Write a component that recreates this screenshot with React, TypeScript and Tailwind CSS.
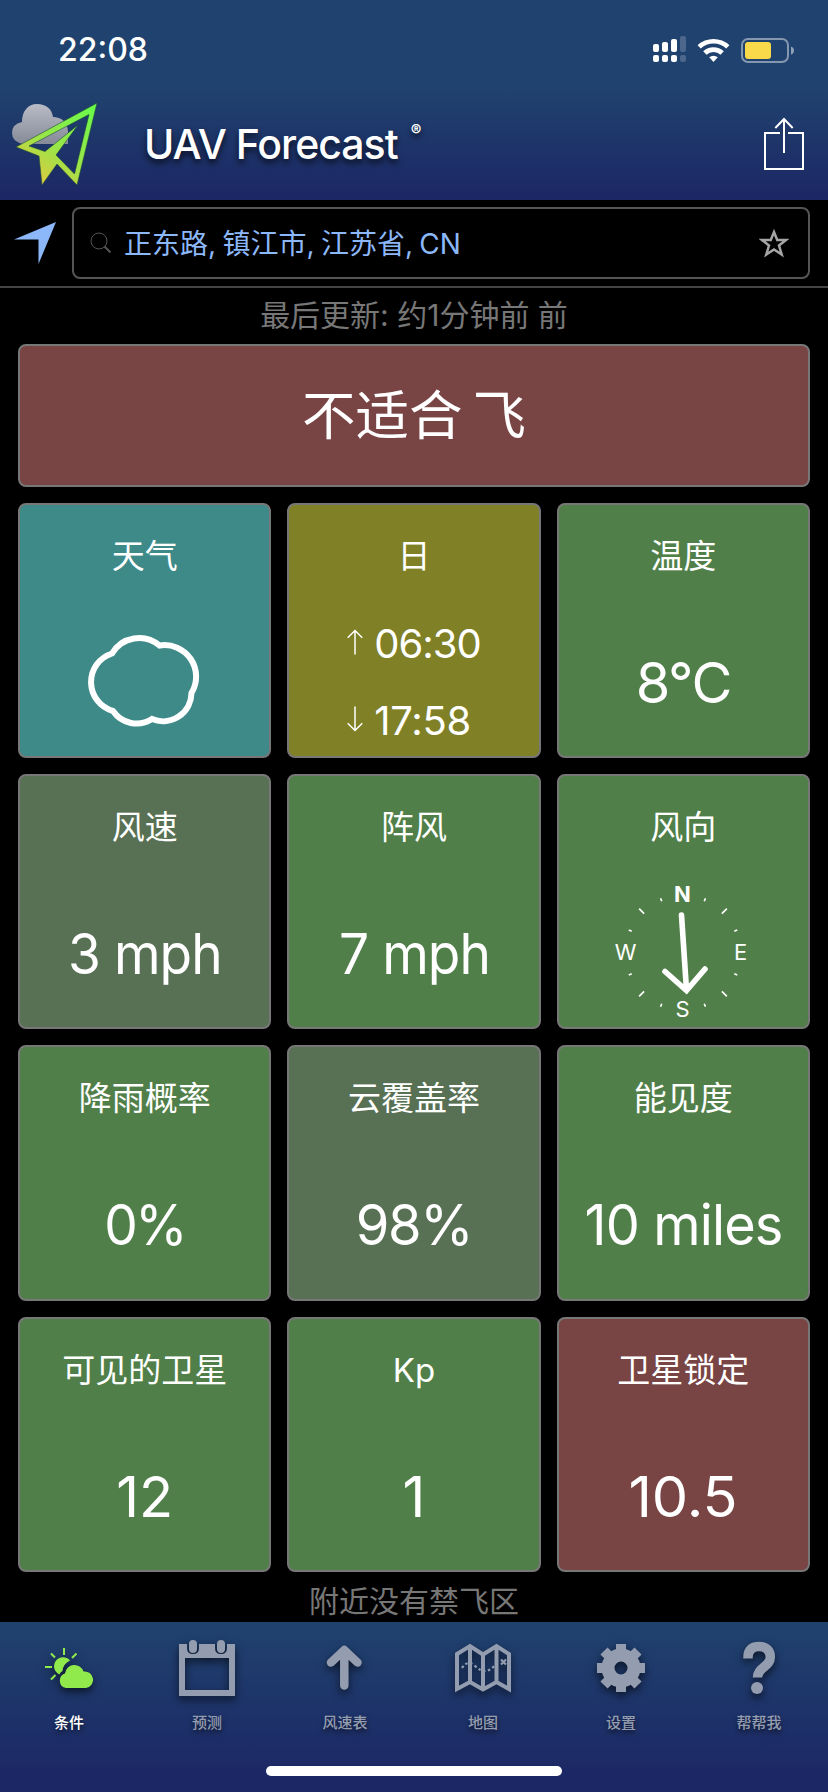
import type { ReactNode } from 'react'

type TileProps = {
  title: string
  color: string
  value?: string
  fit?: string
  children?: ReactNode
}

function Tile({ title, color, value, fit = '', children }: TileProps) {
  return (
    <div className={`flex h-[255.4px] flex-col items-center rounded-lg border-2 border-[#777777] text-white ${color}`}>
      <div className="mt-[29px] text-[33px] leading-[44px]">{title}</div>
      {value && <div className={`mt-[72px] text-[56px] leading-[66px] whitespace-nowrap ${fit}`}>{value}</div>}
      {children}
    </div>
  )
}

function Logo() {
  return (
    <svg className="ml-3 h-[84px] w-[87px]" viewBox="12 102 87 84">
      <defs>
        <linearGradient id="cloud" x1="0" y1="0" x2="0" y2="1">
          <stop offset="0" stopColor="#b9bcc6" />
          <stop offset="1" stopColor="#868a98" />
        </linearGradient>
        <linearGradient id="plane" gradientUnits="userSpaceOnUse" x1="92" y1="108" x2="40" y2="182">
          <stop offset="0" stopColor="#6bf94b" />
          <stop offset="0.6" stopColor="#9be448" />
          <stop offset="1" stopColor="#dccb40" />
        </linearGradient>
      </defs>
      <path fill="url(#cloud)" d="M22 144Q12 141 12 133Q12 124 22 122C22 111 28 104 37 104C46 104 52 109 53 117C61 117 68 122 68 132V144Z" />
      <path
        fill="url(#plane)"
        fillRule="evenodd"
        stroke="#1d4c38"
        strokeWidth="0.6"
        d="M97 103L16 147L39 156L42 185L57 164L77 185ZM89 114.500L74.500 174L56 155L78 125L45 151.500L29 146Z"
      />
    </svg>
  )
}

function StatusIcons() {
  return (
    <svg className="h-[28px] w-[142px]" viewBox="653 35 142 28">
      <g fill="#fff">
        <rect x="653" y="43" width="6" height="8" rx="2" />
        <rect x="662" y="41" width="6" height="10" rx="2" />
        <rect x="671" y="38" width="6" height="13" rx="2" />
        <rect x="680" y="35" width="6" height="16" rx="2" opacity=".2" />
        <rect x="653" y="54" width="6" height="7" rx="2" />
        <rect x="662" y="54" width="6" height="7" rx="2" />
        <rect x="671" y="54" width="6" height="7" rx="2" />
        <rect x="680" y="54" width="6" height="7" rx="2" opacity=".2" />
        <path d="M697.600 44.300a23 23 0 0 1 31.800 0l-3.200 3.300a18.400 18.400 0 0 0-25.400 0Z" />
        <path d="M703.200 50.300a15 15 0 0 1 20.600 0l-3.300 3.400a10.200 10.200 0 0 0-14 0Z" />
        <path d="M709.200 56.300a6.500 6.500 0 0 1 8.600 0L713.500 61Z" />
      </g>
      <rect x="742" y="38" width="46" height="23" rx="6" fill="none" stroke="#fff" strokeOpacity=".45" strokeWidth="2" />
      <rect x="745" y="41" width="26" height="17" rx="3" fill="#f9d84a" />
      <path d="M791 45.500q3 1 3 4t-3 4Z" fill="#fff" opacity=".5" />
    </svg>
  )
}

function Compass() {
  const long = [45, 135, 225, 315]
  const short = [22.5, 67.5, 112.5, 157.5, 202.5, 247.5, 292.5, 337.5]
  return (
    <svg className="mt-[34px] h-[136px] w-[140px] overflow-visible" viewBox="613 883 140 136" fill="#fff">
      <g stroke="#fff" strokeWidth="1.6">
        {long.map((a) => (
          <path key={a} d="M683 897.500v-7" transform={`rotate(${a} 683 952.5)`} />
        ))}
        {short.map((a) => (
          <path key={a} d="M683 897v-3.200" transform={`rotate(${a} 683 952.5)`} />
        ))}
      </g>
      <g fontSize="22" textAnchor="middle">
        <text x="682.5" y="902" fontWeight="700">N</text>
        <text x="682.5" y="1017">S</text>
        <text x="625.5" y="960">W</text>
        <text x="740.5" y="960">E</text>
      </g>
      <path d="M681.500 915L686.500 990M665 971.500L686.500 990.500L705 969" fill="none" stroke="#fff" strokeWidth="5.600" strokeLinecap="round" />
    </svg>
  )
}

function SunRow({ time, down }: { time: string; down?: boolean }) {
  return (
    <div className="flex h-[46px] items-center">
      <svg className="mr-[11px] mb-1 h-[26px] w-4" viewBox="0 0 16 26" fill="none" stroke="#fff" strokeWidth="1.500">
        {down ? <path d="M8 .5v24M.7 17.300L8 24.500l7.300-7.200" /> : <path d="M8 25.500v-24M.7 8.700L8 1.500l7.300 7.200" />}
      </svg>
      <span className={`text-[40px] ${down ? 'tracking-[-0.3px]' : 'tracking-[-1px]'}`}>{time}</span>
    </div>
  )
}

const icons: Record<string, ReactNode> = {
  weather: (
    <>
      <g stroke="currentColor" strokeWidth="2">
        <path d="M64 1648v7M45 1667h7M51 1653.500l4 4M76.500 1653.500l-4.500 4.500M51 1679.500l4.500-4.500" />
      </g>
      <path d="M59.500 1674.500A9 9 0 1 1 70 1660.500Q63 1664 62.500 1671Q60 1672 59.500 1674.500Z" />
      <path d="M66 1688A7.500 7.500 0 0 1 65 1673.500A9.500 9.500 0 0 1 83.500 1671.500A8.300 8.300 0 0 1 86 1688Z" />
    </>
  ),
  calendar: (
    <>
      <path fillRule="evenodd" d="M179 1644h8v4q0 6 6 6t6-6v-4h16v4q0 6 6 6t6-6v-4h8v52h-56ZM185 1658v32h44v-32Z" />
      <rect x="189" y="1640" width="8" height="13" rx="4" />
      <rect x="217" y="1640" width="8" height="13" rx="4" />
    </>
  ),
  arrow: <path d="M344.300 1685.500V1651M331 1662.500L344.300 1650L357.500 1662.500" fill="none" stroke="currentColor" strokeWidth="8.500" strokeLinecap="round" strokeLinejoin="round" />,
  map: (
    <g fill="none" stroke="currentColor">
      <path strokeWidth="4" d="M457 1654L470 1646L483 1654.500L496.500 1646L509 1654V1689L496.500 1682L483 1689.500L470 1682L457 1689ZM470 1646V1682M483 1654V1690M496.500 1646V1682" />
      <path strokeWidth="2.200" strokeDasharray="2.5 2.5" d="M462 1668Q467 1660 474 1665Q481 1672 487 1671Q494 1668 497 1662" />
      <path strokeWidth="2.200" d="M501 1659.500l5 5M506 1659.500l-5 5" />
    </g>
  ),
  gear: (
    <>
      <circle cx="621" cy="1668" r="13" fill="none" stroke="currentColor" strokeWidth="13" />
      <g stroke="currentColor" strokeWidth="10">
        <path d="M621 1644v9M621 1683v9M597 1668h9M636 1668h9M604 1651l7 7M631 1678l7 7M604 1685l7-7M631 1658l7-7" />
      </g>
    </>
  ),
  help: (
    <>
      <path
        d="M748 1658.500V1657C748 1649 753 1646.500 759 1646.500C766 1646.500 770.300 1650.500 770.300 1657C770.300 1667 757.500 1667 757.500 1677.500"
        fill="none"
        stroke="currentColor"
        strokeWidth="9.500"
      />
      <circle cx="757" cy="1688" r="6" />
    </>
  ),
}

const tabs = [
  { label: '条件', icon: 'weather', x: 39, active: true },
  { label: '预测', icon: 'calendar', x: 177 },
  { label: '风速表', icon: 'arrow', x: 315 },
  { label: '地图', icon: 'map', x: 453 },
  { label: '设置', icon: 'gear', x: 591 },
  { label: '帮帮我', icon: 'help', x: 729 },
]

export default function App() {
  return (
    <div className="flex h-[1792px] w-[828px] flex-col overflow-hidden bg-black font-['Inter','Noto_Sans_CJK_SC',sans-serif]">
      <header className="h-[200px] shrink-0 bg-linear-to-b from-[#20426e] from-44% to-[#1c2865] to-97% text-white">
        <div className="flex h-[100px] items-center justify-between pr-[33px] pl-[58px]">
          <span className="text-[32px] font-medium">22:08</span>
          <StatusIcons />
        </div>
        <div className="flex h-[88px] items-center">
          <Logo />
          <h1 className="mt-[2px] ml-[45px] text-[41px] font-medium tracking-[-1px] [text-shadow:0_4px_6px_#000b]">UAV Forecast</h1>
          <span className="mb-7 ml-[13px] text-[16px] font-bold [text-shadow:0_4px_6px_#000b]">®</span>
          <svg className="mr-[24px] ml-auto h-[54px] w-10" viewBox="0 0 40 54" fill="none" stroke="#fff" strokeWidth="2">
            <path d="M16 16H1v36h38V16H24M20 36V2M11.300 11L20 2l8.700 9" />
          </svg>
        </div>
      </header>

      <div className="flex h-[88px] shrink-0 items-start border-b-2 border-[#444444] pt-[7px]">
        <svg className="mt-[15px] ml-[14px] h-[43px] w-[43px]" viewBox="0 0 43 43" fill="#8cb8fa">
          <path d="M42 0L24.500 42V17.500H0Z" />
        </svg>
        <div className="ml-[15px] flex h-[72px] w-[738px] items-center rounded-lg border-2 border-[#555555] pr-[19px] pl-[16px]">
          <svg className="h-[22px] w-[22px]" viewBox="0 0 22 22" fill="none" stroke="#555">
            <circle cx="9" cy="9" r="8" />
            <path d="M14.500 14.500l6 6" strokeWidth="2" />
          </svg>
          <span className="mt-px ml-3 text-[28px] text-[#8cb8fa] [word-spacing:-1.5px]">正东路, 镇江市, 江苏省, CN</span>
          <svg className="ml-auto h-[30px] w-[30px]" viewBox="0 0 30 30" fill="none" stroke="#a5a5a5" strokeWidth="2.500">
            <path d="M15 4L18.200 12H27L20 17.500L22.700 26.500L15 21.500L7.300 26.500L10 17.500L3 12H11.800Z" />
          </svg>
        </div>
      </div>

      <p className="h-[56px] shrink-0 text-center text-[30px] leading-[55px] text-[#777777]">最后更新: 约1分钟前 前</p>

      <main className="mx-[18px] shrink-0">
        <div className="flex h-[142.500px] items-center justify-center rounded-lg border-2 border-[#777777] bg-[#784444] pt-px text-[53.500px] text-white [word-spacing:-5px]">
          不适合 飞
        </div>
        <div className="mt-4 grid grid-cols-3 gap-4">
          <Tile title="天气" color="bg-[#3d8a89]">
            <svg className="mt-[54px] h-[100px] w-[120px]" viewBox="85 632 120 100" fill="none" stroke="#fff" strokeWidth="6">
              <path d="M112 653.500A31.500 31.500 0 0 1 159.500 645.500A31.500 31.500 0 0 1 191.500 693A28.500 28.500 0 0 1 152 719A28.500 28.500 0 0 1 113 711A30 30 0 0 1 112 653.500Z" />
            </svg>
          </Tile>
          <Tile title="日" color="bg-[#808026]">
            <div className="mt-[43px] flex flex-col gap-[31px]">
              <SunRow time="06:30" />
              <SunRow time="17:58" down />
            </div>
          </Tile>
          <Tile title="温度" color="bg-[#517f49]" value="8°C" fit="tracking-[-1.5px]" />
          <Tile title="风速" color="bg-[#587054]" value="3 mph" fit="scale-x-[0.95] tracking-[-1px]" />
          <Tile title="阵风" color="bg-[#517f49]" value="7 mph" fit="scale-x-[0.95] tracking-[-1px]" />
          <Tile title="风向" color="bg-[#517f49]">
            <Compass />
          </Tile>
          <Tile title="降雨概率" color="bg-[#517f49]" value="0%" fit="scale-x-[0.95] tracking-[-2.5px]" />
          <Tile title="云覆盖率" color="bg-[#587054]" value="98%" fit="scale-x-[0.97] tracking-[-1.5px]" />
          <Tile title="能见度" color="bg-[#517f49]" value="10 miles" fit="scale-x-[0.965] tracking-[-0.9px]" />
          <Tile title="可见的卫星" color="bg-[#517f49]" value="12" />
          <Tile title="Kp" color="bg-[#517f49]" value="1" />
          <Tile title="卫星锁定" color="bg-[#784444]" value="10.5" fit="scale-x-[1.03]" />
        </div>
      </main>

      <p className="h-[50px] shrink-0 text-center text-[30px] leading-[58px] text-[#777777]">附近没有禁飞区</p>

      <nav className="flex h-[170px] shrink-0 flex-col items-center bg-linear-to-b from-[#20426e] to-[#1c2865] to-88%">
        <div className="grid w-full grid-cols-6">
          {tabs.map((tab) => (
            <div key={tab.label} className="flex flex-col items-center pt-[14px]">
              <svg
                className={`h-[64px] w-[60px] overflow-visible drop-shadow-[0_4px_4px_#0009] ${tab.active ? 'text-[#91ea4b]' : 'text-[#949daf]'}`}
                viewBox={`${tab.x} 1636 60 64`}
                fill="currentColor"
              >
                {icons[tab.icon]}
              </svg>
              <span
                className={`mt-[12px] text-[15px] leading-[22px] font-medium [text-shadow:0_3px_5px_#0009] ${tab.active ? 'text-white' : 'text-[#949daf]'}`}
              >
                {tab.label}
              </span>
            </div>
          ))}
        </div>
        <div className="mt-[32px] h-[10px] w-[296px] rounded-full bg-white" />
      </nav>
    </div>
  )
}
